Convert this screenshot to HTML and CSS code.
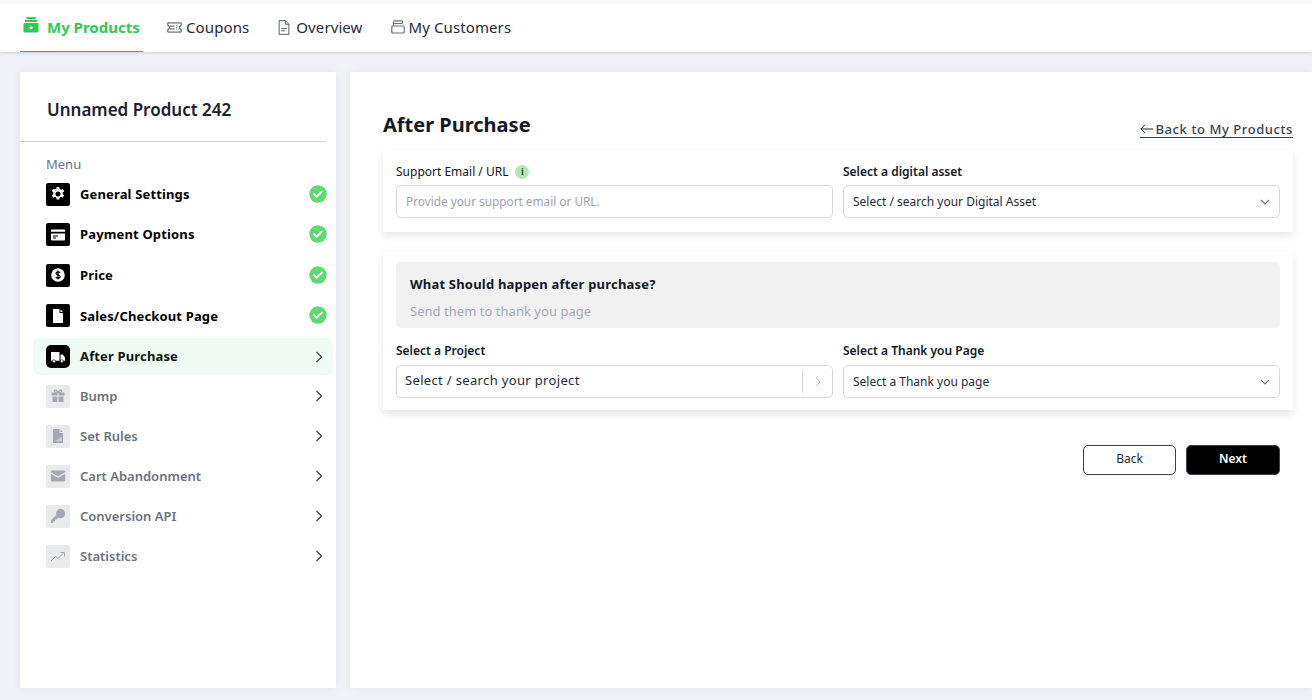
FILE: index.html
```html
<!DOCTYPE html>
<html lang="en">
<head>
<meta charset="utf-8">
<title>After Purchase</title>
<link rel="stylesheet" href="styles.css">
</head>
<body>
<header class="topbar">
  <nav class="tabs">
    <a class="tab tab-active">
      <svg class="tab-icon-main" viewBox="0 0 16 16"><path fill="#2fcb52" d="M3.500 0h9v2h-9zM2 3h12v2H2zM1.500 6h13a1 1 0 0 1 1 1v7.500a1 1 0 0 1-1 1h-13a1 1 0 0 1-1-1V7a1 1 0 0 1 1-1z"/><path fill="#fff" d="M8 8.700l.7 1.300 1.400.2-1 1 .2 1.400L8 11.900l-1.300.7.2-1.400-1-1 1.400-.2z"/></svg>
      My Products
    </a>
    <a class="tab">
      <svg class="tab-icon coupon" viewBox="0 0 16 12"><path fill="none" stroke="#374151" stroke-width="1" d="M.7 1h14.600v3a2 2 0 0 0 0 4v3H.7V8a2 2 0 0 0 0-4z"/><path stroke="#374151" stroke-width="1" d="M3 4.500h5M3 7.500h5M10.500 3.500v1M10.500 5.500v1M10.500 7.500v1M12.500 4.500h1M12.500 7.500h1"/></svg>
      Coupons
    </a>
    <a class="tab">
      <svg class="tab-icon doc" viewBox="0 0 12 16"><path fill="none" stroke="#4b5563" d="M.8.7h6.700l3.700 3.800v10.800H.8zM7.500.7v3.800h3.700"/><path stroke="#4b5563" d="M3 9h6M3 11.500h4"/></svg>
      Overview
    </a>
    <a class="tab tab-last">
      <svg class="tab-icon stack" viewBox="0 0 14 14"><path fill="none" stroke="#6b7280" stroke-width="1.200" d="M3.500.8h7a1 1 0 0 1 1 1V3.500M2.500 3.500h9M1.800 6h10.400a1 1 0 0 1 1 1v5a1 1 0 0 1-1 1H1.800a1 1 0 0 1-1-1V7a1 1 0 0 1 1-1zM2.500 6V3.500M3.500.8a1 1 0 0 0-1 1v1.700"/></svg>
      My Customers
    </a>
  </nav>
</header>

<div class="layout">
  <aside class="sidebar">
    <h2 class="product-name">Unnamed Product 242</h2>
    <div class="menu-title">Menu</div>
    <ul class="menu">
      <li class="item done">
        <span class="ico"><svg viewBox="0 0 16 16"><path fill="#fff" fill-rule="evenodd" d="M6.700 1h2.600l.4 2 1.300.7 1.900-.7 1.300 2.300-1.500 1.300v1.400l1.500 1.300-1.300 2.300-1.900-.7-1.300.7-.4 2H6.700l-.4-2-1.300-.7-1.900.7-1.300-2.300 1.500-1.300V6.300L1.800 5l1.300-2.300 1.900.7 1.300-.7zM8 5.500a2.500 2.500 0 1 0 0 5 2.500 2.500 0 0 0 0-5z"/></svg></span>
        <span class="label">General Settings</span>
        <svg class="check" viewBox="0 0 18 18"><circle cx="9" cy="9" r="8.700" fill="#5dd96f"/><path fill="none" stroke="#fff" stroke-width="2" stroke-linecap="round" stroke-linejoin="round" d="M5.200 9.300l2.600 2.500 5-5.200"/></svg>
      </li>
      <li class="item done">
        <span class="ico"><svg viewBox="0 0 16 16"><path fill="#fff" fill-rule="evenodd" d="M2 2.500h12a1 1 0 0 1 1 1v9a1 1 0 0 1-1 1H2a1 1 0 0 1-1-1v-9a1 1 0 0 1 1-1zM1 4.700v1.800h14V4.700zM3 8.500v1h5v-1zM3 10.500v1h3v-1z"/></svg></span>
        <span class="label label-up">Payment Options</span>
        <svg class="check" viewBox="0 0 18 18"><circle cx="9" cy="9" r="8.700" fill="#5dd96f"/><path fill="none" stroke="#fff" stroke-width="2" stroke-linecap="round" stroke-linejoin="round" d="M5.200 9.300l2.600 2.500 5-5.200"/></svg>
      </li>
      <li class="item done">
        <span class="ico"><svg viewBox="0 0 16 16"><circle cx="8" cy="8" r="6.800" fill="#fff"/><path fill="none" stroke="#000" stroke-width="1.200" d="M10 5.800C9.600 5 8.800 4.800 8 4.800c-1.100 0-2 .5-2 1.500 0 2.200 4.100 1.100 4.100 3.300 0 1-.9 1.600-2.100 1.600-1 0-1.800-.4-2.100-1.200M8 3.500v9"/></svg></span>
        <span class="label">Price</span>
        <svg class="check" viewBox="0 0 18 18"><circle cx="9" cy="9" r="8.700" fill="#5dd96f"/><path fill="none" stroke="#fff" stroke-width="2" stroke-linecap="round" stroke-linejoin="round" d="M5.200 9.300l2.600 2.500 5-5.200"/></svg>
      </li>
      <li class="item done">
        <span class="ico"><svg viewBox="0 0 16 16"><path fill="#fff" d="M3 1h6.500v4H13v10H3zM10.500 1.200L13 4h-2.500z"/></svg></span>
        <span class="label">Sales/Checkout Page</span>
        <svg class="check" viewBox="0 0 18 18"><circle cx="9" cy="9" r="8.700" fill="#5dd96f"/><path fill="none" stroke="#fff" stroke-width="2" stroke-linecap="round" stroke-linejoin="round" d="M5.200 9.300l2.600 2.500 5-5.200"/></svg>
      </li>
      <li class="item current">
        <span class="ico ico-round"><svg viewBox="0 0 16 16"><path fill="#fff" d="M1 3h8.500v8.800H1zM10.500 5.500h2.300l2.200 3v3.300h-4.500z"/><circle cx="4" cy="12.200" r="1.500" fill="#fff" stroke="#000" stroke-width=".6"/><circle cx="11.800" cy="12.200" r="1.500" fill="#fff" stroke="#000" stroke-width=".6"/></svg></span>
        <span class="label">After Purchase</span>
        <svg class="chev" viewBox="0 0 8 12"><path fill="none" stroke="#374151" stroke-width="1.200" d="M1.500 1l5 5-5 5"/></svg>
      </li>
      <li class="item off">
        <span class="ico"><svg viewBox="0 0 16 16"><path fill="#a3a8b4" d="M1.500 4.500h6v3h-6zM8.500 4.500h6v3h-6zM2.500 8.500h5V14h-5zM8.500 8.500h5V14h-5z"/><path fill="none" stroke="#a3a8b4" stroke-width="1.200" d="M8 4.500C6.500 1.500 3.500 1.500 4.500 3.500c.4.700 2 1 3.500 1zm0 0c1.500-3 4.500-3 3.500-1-.4.700-2 1-3.500 1z"/></svg></span>
        <span class="label">Bump</span>
        <svg class="chev" viewBox="0 0 8 12"><path fill="none" stroke="#374151" stroke-width="1.200" d="M1.500 1l5 5-5 5"/></svg>
      </li>
      <li class="item off">
        <span class="ico"><svg viewBox="0 0 16 16"><path fill="#a3a8b4" d="M3 1h6.500v4H13v10H3zM10.500 1.200L13 4h-2.500z"/><path fill="#e9eaec" d="M6.500 12h1v1.500h-1zM8.500 10.500h1v3h-1zM10.500 9h1v4.500h-1z"/></svg></span>
        <span class="label">Set Rules</span>
        <svg class="chev" viewBox="0 0 8 12"><path fill="none" stroke="#374151" stroke-width="1.200" d="M1.500 1l5 5-5 5"/></svg>
      </li>
      <li class="item off">
        <span class="ico"><svg viewBox="0 0 16 16"><path fill="#a3a8b4" d="M2 2.500h12a1.200 1.200 0 0 1 1.200 1.200v.5L8 8.300.8 4.200v-.5A1.200 1.200 0 0 1 2 2.500zM.8 5.700L8 9.800l7.200-4.100v6.600a1.200 1.200 0 0 1-1.200 1.200H2a1.200 1.200 0 0 1-1.200-1.200z"/></svg></span>
        <span class="label">Cart Abandonment</span>
        <svg class="chev" viewBox="0 0 8 12"><path fill="none" stroke="#374151" stroke-width="1.200" d="M1.500 1l5 5-5 5"/></svg>
      </li>
      <li class="item off">
        <span class="ico"><svg viewBox="0 0 16 16"><path fill="#a3a8b4" d="M10.500.8a4.700 4.700 0 1 1-2.200 8.900L6.500 11.500H5v1.700H3.300v1.700L1 15v-2.700l5.400-5.400A4.700 4.700 0 0 1 10.500.8z"/></svg></span>
        <span class="label">Conversion API</span>
        <svg class="chev" viewBox="0 0 8 12"><path fill="none" stroke="#374151" stroke-width="1.200" d="M1.500 1l5 5-5 5"/></svg>
      </li>
      <li class="item off">
        <span class="ico"><svg viewBox="0 0 16 16"><path fill="none" stroke="#a3a8b4" stroke-width="1" d="M1 13l4.500-4.500 2.500 2 6-6M10.500 4.500H14.500V8.500"/></svg></span>
        <span class="label">Statistics</span>
        <svg class="chev" viewBox="0 0 8 12"><path fill="none" stroke="#374151" stroke-width="1.200" d="M1.500 1l5 5-5 5"/></svg>
      </li>
    </ul>
  </aside>

  <main class="content">
    <div class="head">
      <h1 class="title">After Purchase</h1>
      <a class="backlink"><svg class="back-arrow" viewBox="0 0 13 10"><path fill="none" stroke="#1f2937" d="M5 .8L.8 5 5 9.200M.8 5H13"/></svg>Back to My Products</a>
    </div>

    <section class="card card-one">
      <div class="cols">
        <div class="field">
          <div class="lbl lbl-plain">Support Email / URL <span class="info">i</span></div>
          <div class="input placeholder">Provide your support email or URL.</div>
        </div>
        <div class="field">
          <div class="lbl">Select a digital asset</div>
          <div class="input select">Select / search your Digital Asset
            <svg class="down" viewBox="0 0 10 6"><path fill="none" stroke="#6b7280" stroke-width="1.200" d="M1 1l4 4 4-4"/></svg>
          </div>
        </div>
      </div>
    </section>

    <section class="card card-two">
      <div class="notice">
        <div class="notice-title">What Should happen after purchase?</div>
        <div class="notice-text">Send them to thank you page</div>
      </div>
      <div class="cols cols-two">
        <div class="field">
          <div class="lbl">Select a Project</div>
          <div class="input project">Select / search your project
            <span class="sep"></span>
            <svg class="side" viewBox="0 0 6 10"><path fill="none" stroke="#b8bcc6" stroke-width="1" d="M1 1l4 4-4 4"/></svg>
          </div>
        </div>
        <div class="field">
          <div class="lbl">Select a Thank you Page</div>
          <div class="input select">Select a Thank you page
            <svg class="down" viewBox="0 0 10 6"><path fill="none" stroke="#6b7280" stroke-width="1.200" d="M1 1l4 4 4-4"/></svg>
          </div>
        </div>
      </div>
    </section>

    <div class="actions">
      <button class="btn btn-back">Back</button>
      <button class="btn btn-next">Next</button>
    </div>
  </main>
</div>
</body>
</html>
```
FILE: styles.css
```css
* { box-sizing: border-box; }
html, body { margin: 0; padding: 0; }
body {
  width: 1312px;
  height: 700px;
  overflow: hidden;
  background: #f0f1f6;
  font-family: "Noto Sans", "Open Sans", sans-serif;
  color: #111827;
}
.topbar {
  height: 52px;
  background: #fff;
  border-top: 4px solid #fafafa;
  box-shadow: 0 1px 3px rgba(0, 0, 0, .14);
  padding-left: 20px;
  position: relative;
}
.tabs { display: flex; height: 48px; }
.tab {
  display: flex;
  align-items: center;
  font-size: 15px;
  letter-spacing: .1px;
  color: #1f2937;
  margin-right: 29px;
  height: 48px;
  padding-bottom: 2px;
  white-space: nowrap;
}
.tab-last { margin-left: -1px; }
.tab-active {
  width: 123px;
  margin-right: 24px;
  padding-left: 3px;
  letter-spacing: 0;
  color: #2fcb52;
  font-weight: 700;
  border-bottom: 1px solid #38b755;
}
.tab-icon-main { width: 16px; height: 16px; margin-right: 8px; margin-top: -3px; }
.tab-icon { margin-right: 4px; }
.coupon { width: 15px; height: 11px; }
.doc { width: 12px; height: 15px; margin-right: 6px; }
.stack { width: 14px; height: 14px; margin-right: 4px; }

.layout { display: flex; gap: 14px; padding: 20px 0 12px 20px; height: 648px; }
.sidebar {
  width: 316px;
  background: #fff;
  box-shadow: 0 0 8px rgba(0, 0, 0, .06);
  padding: 26px 0 0;
}
.product-name {
  margin: 0 10px 0 0;
  padding: 0 0 18px 27px;
  font-size: 17px;
  line-height: 24px;
  font-weight: 600;
  color: #1a202c;
  border-bottom: 1px solid #d4d4d8;
  box-sizing: content-box;
  height: 25px;
}
.menu-title { font-size: 13px; line-height: 18px; color: #6b7280; margin: 13px 0 0 26px; }
.menu { list-style: none; margin: 1px 0 0 13px; padding: 0; width: 300px; }
.item {
  display: flex;
  align-items: center;
  height: 40px;
  padding: 0 10px 0 13px;
  font-size: 13px;
  font-weight: 600;
}
.item.done { height: 40.500px; padding-right: 6px; color: #000; font-weight: 700; letter-spacing: .15px; }
.item.current { height: 37px; margin: 2px 0 1px; background: #effbf3; border-radius: 6px; color: #111; font-weight: 700; letter-spacing: .15px; }
.item.current .label, .label-up { padding-bottom: 1px; }
.item.off { color: #6b7280; }
.ico {
  width: 24px;
  height: 23px;
  display: flex;
  align-items: center;
  justify-content: center;
  background: #000;
  border-radius: 2px;
  margin-right: 10px;
  flex: none;
}
.ico svg { width: 16px; height: 16px; }
.ico-round { border-radius: 5px; }
.off .ico { background: #e9eaec; }
.label { flex: 1; }
.check { width: 18px; height: 18px; margin-top: -1px; }
.chev { width: 8px; height: 12px; }

.content {
  width: 962px;
  background: #fff;
  box-shadow: 0 0 8px rgba(0, 0, 0, .06);
  padding: 39px 19px 0 33px;
}
.head { display: flex; justify-content: space-between; height: 39px; }
.title { margin: 0; font-size: 20px; line-height: 28px; font-weight: 700; color: #111827; }
.backlink {
  display: flex;
  align-items: center;
  height: 19px;
  margin-top: 8px;
  padding-top: 2px;
  font-size: 13px;
  font-weight: 500;
  letter-spacing: .58px;
  color: #374151;
  border-bottom: 1px solid #374151;
}
.back-arrow { width: 13px; height: 10px; margin-right: 3px; }
.card {
  background: #fff;
  box-shadow: 0 4px 8px rgba(0, 0, 0, .1);
  padding: 0 13px;
}
.card-one { height: 82px; padding-top: 13px; }
.card-two { height: 158px; margin-top: 20px; padding-top: 10px; }
.cols { display: grid; grid-template-columns: 437px 437px; gap: 10px; }
.cols-two { margin-top: 15px; }
.lbl { font-size: 12px; line-height: 17px; font-weight: 600; color: #111827; margin-bottom: 5px; height: 17px; }
.cols-two .lbl { margin-top: -1px; margin-bottom: 6px; }
.lbl-plain { font-weight: 400; display: flex; align-items: center; gap: 7px; }
.info {
  width: 14px;
  height: 14px;
  border-radius: 50%;
  background: #b9e6b9;
  color: #1f5130;
  font: 700 10px/14px "Liberation Serif", serif;
  text-align: center;
}
.input {
  height: 33px;
  border: 1px solid #d6d8e0;
  border-radius: 5px;
  display: flex;
  align-items: center;
  font-size: 12px;
  padding: 0 9px;
  color: #1f2937;
  position: relative;
}
.placeholder { color: #9ca3af; font-size: 11.800px; padding-bottom: 1px; }
.select { justify-content: space-between; }
.down { width: 10px; height: 6px; }
.project { font-size: 13px; padding: 0 8px 3px; letter-spacing: .34px; }
.sep { position: absolute; right: 29px; top: 4px; bottom: 4px; width: 1px; background: #d6d8e0; }
.side { position: absolute; right: 11px; top: 11px; width: 6px; height: 10px; }
.notice { height: 66px; background: #f1f1f2; border-radius: 5px; padding: 13px 14px; }
.notice-title { font-size: 13px; line-height: 18px; font-weight: 700; letter-spacing: .2px; color: #111827; }
.notice-text { font-size: 13px; line-height: 18px; letter-spacing: .03px; color: #a3a8b4; margin-top: 9px; }
.actions { display: flex; justify-content: flex-end; gap: 10px; padding-right: 13px; margin-top: 35px; }
.btn {
  width: 93px;
  height: 30px;
  border-radius: 5px;
  border: 1px solid #374151;
  font-family: inherit;
  font-size: 12px;
  padding: 0 0 4px;
}
.btn-back { background: #fff; color: #1f2937; }
.btn-next { width: 94px; background: #000; color: #fff; font-weight: 600; }
```
